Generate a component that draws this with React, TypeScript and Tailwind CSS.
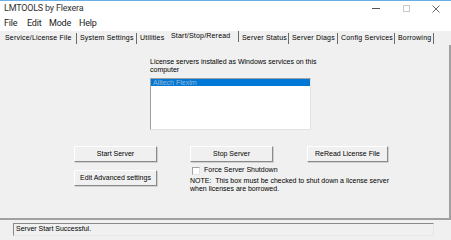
import React from "react"

const tabs = [
  { label: "Service/License File", w: "w-[75px]" },
  { label: "System Settings", w: "w-[60px]" },
  { label: "Utilities", w: "w-[30px]", noSep: true },
  { label: "Start/Stop/Reread", w: "w-[72px]", active: true },
  { label: "Server Status", w: "w-[50px]" },
  { label: "Server Diags", w: "w-[49px]" },
  { label: "Config Services", w: "w-[57px]" },
  { label: "Borrowing", w: "w-[39px]" },
]

function Btn({ children, w }: { children: React.ReactNode; w: string }) {
  return (
    <div className={`${w} h-[16px] flex items-center justify-center bg-[#f0f0f0] border-t border-l border-white border-r border-b border-r-[#8a8a8a] border-b-[#8a8a8a] shadow-[1px_1px_0_#d0d0d0]`}>
      {children}
    </div>
  )
}

export default function App() {
  return (
    <div className="w-[451px] h-[240px] bg-[#f0f0f0] flex flex-col overflow-hidden text-black" style={{ fontFamily: '"Liberation Sans", Arial, sans-serif' }}>
      {/* Title bar */}
      <div className="h-[16px] bg-white border-t border-[#6aaee6] flex items-center pl-[4px] text-[9px] tracking-[-0.2px] text-[#333]" style={{ fontFamily: 'Roboto, sans-serif' }}>
        <span className="leading-none">LMTOOLS by Flexera</span>
        <div className="ml-auto flex items-center h-full">
          <div className="w-[30px] flex justify-center"><div className="w-[8px] h-px bg-[#555]" /></div>
          <div className="w-[30px] flex justify-center"><div className="w-[7px] h-[7px] border border-[#c8c8c8]" /></div>
          <div className="w-[30px] flex justify-center">
            <svg width="8" height="8" viewBox="0 0 8 8"><path d="M0.5 0.5L7.5 7.5M7.5 0.5L0.5 7.5" stroke="#555" strokeWidth="0.9" /></svg>
          </div>
        </div>
      </div>

      {/* Menu */}
      <div className="h-[15px] bg-white flex items-center pl-[4px] text-[9px] tracking-[-0.2px] text-[#222]" style={{ fontFamily: 'Roboto, sans-serif' }}>
        <span className="w-[23px]">File</span>
        <span className="w-[22px]">Edit</span>
        <span className="w-[30px]">Mode</span>
        <span>Help</span>
      </div>

      {/* Tabs */}
      <div className="h-[14px] flex items-center pl-[2px] text-[7px] tracking-[0.2px]">
        {tabs.map((t) => (
          <div key={t.label} className={`${t.w} h-[11px] flex items-center pl-[3px] whitespace-nowrap ${t.noSep ? "" : "border-r border-[#6a6a6a]"} ${t.active ? "-mt-[4px] pl-[4px]" : ""}`}>
            {t.label}
          </div>
        ))}
      </div>

      {/* Panel */}
      <div className="h-[175px] border-r-2 border-b-2 border-[#a0a0a0] text-[7px] pt-[13px]">
        <div className="pl-[150px] leading-[8px]">
          License servers installed as Windows services on this<br />computer
        </div>
        <div className="ml-[150px] mt-[4px] w-[161px] h-[52px] bg-white border-t border-l border-[#a0a0a0] border-r border-b border-r-[#e3e3e3] border-b-[#e3e3e3]">
          <div className="h-[7px] bg-[#0078d7] text-[#9bb8d6] leading-[7px] pl-[2px]">Alltech Flexlm</div>
        </div>

        <div className="flex mt-[16px] pl-[74px]">
          <div className="flex flex-col">
            <Btn w="w-[83px]">Start Server</Btn>
            <div className="mt-[8px]"><Btn w="w-[83px]">Edit Advanced settings</Btn></div>
          </div>
          <div className="flex flex-col ml-[33px] w-[83px]">
            <Btn w="w-[83px]">Stop Server</Btn>
            <div className="flex items-center mt-[4px] h-[9px] pl-[2px]">
              <div className="w-[8px] h-[8px] shrink-0 bg-white border-t border-l border-[#a0a0a0] border-r border-b border-r-[#e3e3e3] border-b-[#e3e3e3]" />
              <span className="ml-[4px] whitespace-nowrap">Force Server Shutdown</span>
            </div>
            <div className="mt-[2px] leading-[8px] whitespace-nowrap">
              NOTE:&nbsp; This box must be checked to shut down a license server<br />when licenses are borrowed.
            </div>
          </div>
          <div className="ml-[34px]">
            <Btn w="w-[81px]">ReRead License File</Btn>
          </div>
        </div>
      </div>

      {/* Status bar */}
      <div className="mt-[3px] ml-[13px] w-[421px] h-[13px] border-t border-l border-[#8a8a8a] border-r border-b border-r-[#e6e6e6] border-b-[#e6e6e6] flex items-center pl-[2px] text-[7px]">
        Server Start Successful.
      </div>
    </div>
  )
}
